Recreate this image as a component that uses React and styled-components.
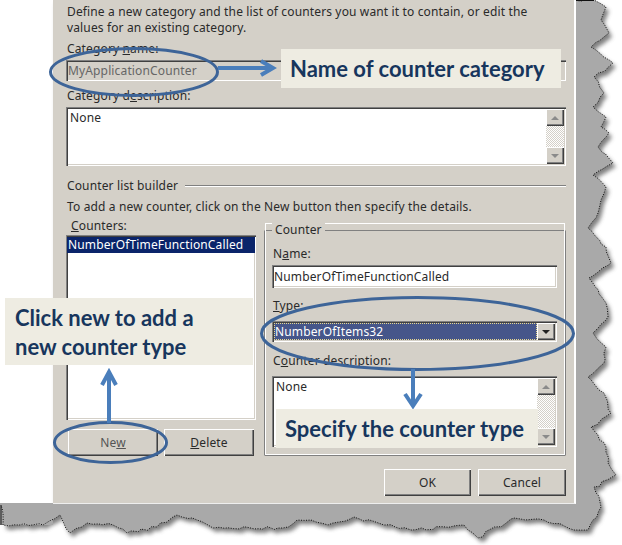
import React from "react";
import styled, { createGlobalStyle } from "styled-components";

const Global = createGlobalStyle`
  html, body { margin: 0; padding: 0; background: #fff; }
  body { font-family: "Noto Sans", "Open Sans", sans-serif; font-size: 12px; color: #2a2a2a; }
`;

const raised = `box-shadow: inset 1px 1px 0 #fff, inset -1px -1px 0 #404040, inset -2px -2px 0 #808080;`;
const sunken = `box-shadow: inset 1px 1px 0 #808080, inset 2px 2px 0 #404040, inset -1px -1px 0 #fff, inset -2px -2px 0 #d4d0c8;`;

const Page = styled.div`
  position: relative;
  width: 622px;
  height: 545px;
  overflow: hidden;
`;
const Backdrop = styled.svg`
  position: absolute;
  left: 0;
  top: 0;
`;
const Dialog = styled.div`
  position: relative;
  box-sizing: border-box;
  margin-left: 53px;
  width: 523px;
  height: 504px;
  padding: 4px 8px 0 13px;
  background: #d4d0c8;
  border-right: 2px solid #fff;
  border-bottom: 1px solid #eee;
  display: flex;
  flex-direction: column;
  letter-spacing: 0.14px;
`;
const Intro = styled.div`
  line-height: 16px;
  margin-left: 1px;
  white-space: nowrap;
`;
const Label = styled.div`
  height: 16px;
  line-height: 16px;
  margin: ${(p) => p.$top || 0}px 0 ${(p) => p.$bottom || 0}px ${(p) => p.$left || 1}px;
  white-space: nowrap;
`;
const Field = styled.div`
  box-sizing: border-box;
  height: ${(p) => p.$h}px;
  background: ${(p) => (p.$disabled ? "#d4d0c8" : "#fff")};
  color: ${(p) => (p.$disabled ? "#666" : "#2a2a2a")};
  ${sunken}
  padding: 0 2px;
  display: flex;
  align-items: center;
  white-space: nowrap;
`;
const TextBox = styled.div`
  box-sizing: border-box;
  height: ${(p) => p.$h}px;
  margin-top: ${(p) => p.$top || 0}px;
  background: #fff;
  ${sunken}
  padding: 2px;
  display: flex;
  justify-content: space-between;
`;
const BoxText = styled.div`
  padding: 1px 0 0 2px;
  line-height: 16px;
`;
const Scrollbar = styled.div`
  width: 18px;
  display: flex;
  flex-direction: column;
  justify-content: space-between;
  background: repeating-conic-gradient(#d4d0c8 0 25%, #fff 0 50%) 0 0 / 2px 2px;
`;
const ArrowButton = styled.div`
  width: 18px;
  height: ${(p) => p.$h || 17}px;
  background: #d4d0c8;
  ${raised}
  display: flex;
  align-items: center;
  justify-content: center;
  flex: none;
`;
const Arrow = styled.i`
  width: 0;
  height: 0;
  border-left: 4px solid transparent;
  border-right: 4px solid transparent;
  ${(p) => (p.$up ? "border-bottom" : "border-top")}: 4px solid ${(p) => p.$color || "#8a8a8a"};
`;
const SectionHead = styled.div`
  display: flex;
  align-items: center;
  gap: 7px;
  height: 16px;
  margin: 11px 0 0 1px;
  white-space: nowrap;
`;
const Rule = styled.div`
  flex: 1;
  height: 2px;
  margin-top: 2px;
  background: linear-gradient(#808080 50%, #fff 50%);
`;
const Columns = styled.div`
  display: flex;
  gap: 8px;
`;
const LeftCol = styled.div`
  width: 190px;
  display: flex;
  flex-direction: column;
`;
const List = styled.div`
  box-sizing: border-box;
  height: 185px;
  margin-top: 1px;
  padding: 2px 1px;
  background: #fff;
  ${sunken}
`;
const ListRow = styled.div`
  height: 16px;
  line-height: 16px;
  padding-left: 1px;
  background: #0a246a;
  color: #fff;
  white-space: nowrap;
`;
const ButtonRow = styled.div`
  display: flex;
  gap: ${(p) => p.$gap}px;
  margin: ${(p) => p.$margin};
  justify-content: ${(p) => p.$justify || "flex-start"};
`;
const Button = styled.div`
  box-sizing: border-box;
  width: ${(p) => p.$w}px;
  height: 27px;
  background: #d4d0c8;
  ${raised}
  color: ${(p) => (p.$dim ? "#555" : "#2a2a2a")};
  display: flex;
  align-items: center;
  justify-content: center;
`;
const RightCol = styled.div`
  width: 302px;
  padding-top: 4px;
`;
const Group = styled.fieldset`
  box-sizing: border-box;
  margin: 0;
  height: 234px;
  padding: 0 8px 0 7px;
  border: 1px solid #808080;
  outline: 1px solid #fff;
  outline-offset: -2px;
  border-radius: 1px;
`;
const Legend = styled.legend`
  margin-left: 0;
  padding: 0 3px;
  line-height: 16px;
  height: 16px;
  position: relative;
  background: #d4d0c8;
`;
const Select = styled.div`
  box-sizing: border-box;
  height: 21px;
  margin-top: 7px;
  ${sunken}
  background: #fff;
  padding: 2px;
  display: flex;
`;
const SelectValue = styled.div`
  flex: 1;
  background: #46568a;
  color: #fff;
  line-height: 17px;
  padding-left: 1px;
  outline: 1px dotted #e8d890;
  outline-offset: -1px;
  white-space: nowrap;
`;
const Overlay = styled.svg`
  position: absolute;
  left: 0;
  top: 0;
  pointer-events: none;
`;
const Callout = styled.div`
  position: absolute;
  box-sizing: border-box;
  left: ${(p) => p.$x}px;
  top: ${(p) => p.$y}px;
  width: ${(p) => p.$w}px;
  height: ${(p) => p.$h}px;
  padding: ${(p) => p.$pad || "0 0 0 9px"};
  background: #eeece2;
  color: #17365d;
  font: 700 22px/29px Lato, "Open Sans", sans-serif;
  display: flex;
  align-items: center;
  white-space: nowrap;
`;

const anchors = [
  [576, 0], [594, 0], [606, 7], [601, 20], [609, 33], [591, 47], [613, 63], [594, 77], [604, 93], [593, 107],
  [606, 117], [601, 127], [609, 133], [598, 147], [613, 163], [593, 175], [606, 187], [601, 200], [598, 213],
  [588, 228], [606, 247], [611, 263], [589, 278], [606, 303], [608, 317], [593, 333], [606, 347], [604, 363],
  [588, 377], [604, 393], [611, 413], [591, 427], [606, 447], [608, 463], [616, 475], [594, 487], [601, 507],
  [588, 530], [574, 530], [544, 520], [514, 518], [478, 538], [464, 525], [411, 530], [384, 525], [354, 517],
  [328, 525], [311, 520], [297, 520], [283, 528], [213, 528], [197, 520], [177, 515], [157, 527], [127, 533],
  [113, 525], [87, 523], [70, 533], [60, 515], [43, 525], [3, 525], [1, 505],
];

function tornPath() {
  let seed = 7;
  const rnd = () => {
    seed = (seed * 16807) % 2147483647;
    return seed / 2147483647 - 0.5;
  };
  const pts = [];
  anchors.forEach((a, i) => {
    pts.push(a);
    const b = anchors[i + 1];
    if (!b) return;
    const steps = Math.floor(Math.hypot(b[0] - a[0], b[1] - a[1]) / 5);
    for (let s = 1; s < steps; s++) {
      const t = s / steps;
      pts.push([a[0] + (b[0] - a[0]) * t + rnd() * 3, a[1] + (b[1] - a[1]) * t + rnd() * 3]);
    }
  });
  return pts.map((p) => `${p[0].toFixed(1)},${p[1].toFixed(1)}`).join(" ");
}

const Torn = () => {
  const pts = tornPath();
  const closed = `${pts} 53,505 53,0`;
  return (
    <Backdrop width="622" height="545">
      <defs>
        <filter id="tornShadow" x="-10%" y="-10%" width="120%" height="120%">
          <feGaussianBlur stdDeviation="2" />
        </filter>
      </defs>
      <polygon points={closed} fill="#555" transform="translate(3 4)" filter="url(#tornShadow)" opacity="0.75" />
      <polygon points={closed} fill="#a9a9a9" />
      <polygon points="0,503 53,503 53,525 0,525" fill="#a9a9a9" />
      <polyline points={pts} fill="none" stroke="#111" strokeWidth="1" strokeDasharray="1 1.5" />
      <path d="M576 .5H594M1 505V525" stroke="#111" fill="none" />
    </Backdrop>
  );
};

const Annotations = () => (
  <Overlay width="622" height="545">
    <g fill="none" stroke="#3d6498" strokeWidth="3">
      <ellipse cx="134" cy="72" rx="83.5" ry="23.5" />
      <ellipse cx="417.5" cy="333.5" rx="156" ry="36" />
      <ellipse cx="110.5" cy="442.5" rx="56" ry="20" />
    </g>
    <g fill="none" stroke="#4a7ebb" strokeWidth="4">
      <path d="M218 68H272M261 61L273 68L261 75" />
      <path d="M109 423V373M102 385L109 372L116 385" />
      <path d="M413 369V405M405 394L413 406L421 394" />
    </g>
  </Overlay>
);

const ScrollBar = () => (
  <Scrollbar>
    <ArrowButton><Arrow $up /></ArrowButton>
    <ArrowButton><Arrow /></ArrowButton>
  </Scrollbar>
);

export default function App() {
  return (
    <Page>
      <Global />
      <Torn />
      <Dialog>
        <Intro>
          Define a new category and the list of counters you want it to contain, or edit the<br />
          values for an existing category.
        </Intro>
        <Label $top={5} $bottom={3}>Category <u>n</u>ame:</Label>
        <Field $h={21} $disabled>MyApplicationCounter</Field>
        <Label $top={7} $bottom={3}>Category d<u>e</u>scription:</Label>
        <TextBox $h={59}>
          <BoxText>None</BoxText>
          <ScrollBar />
        </TextBox>
        <SectionHead>Counter list builder<Rule /></SectionHead>
        <Label $top={6} $bottom={3}>To add a new counter, click on the New button then specify the details.</Label>
        <Columns>
          <LeftCol>
            <Label $left={5}><u>C</u>ounters:</Label>
            <List><ListRow>NumberOfTimeFunctionCalled</ListRow></List>
            <ButtonRow $gap={6} $margin="9px 0 0 2px">
              <Button $w={90} $dim>Ne<u>w</u></Button>
              <Button $w={90}><u>D</u>elete</Button>
            </ButtonRow>
          </LeftCol>
          <RightCol>
            <Group>
              <Legend>Counter</Legend>
              <Label $top={8} $bottom={3}>N<u>a</u>me:</Label>
              <Field $h={23}>NumberOfTimeFunctionCalled</Field>
              <Label $top={10}><u>T</u>ype:</Label>
              <Select>
                <SelectValue>NumberOfItems32</SelectValue>
                <ArrowButton $h={17}><Arrow $color="#222" /></ArrowButton>
              </Select>
              <Label $top={11}>C<u>o</u>unter description:</Label>
              <TextBox $h={71} $top={7}>
                <BoxText>None</BoxText>
                <ScrollBar />
              </TextBox>
            </Group>
          </RightCol>
        </Columns>
        <ButtonRow $gap={7} $margin="13px 0 0 0" $justify="flex-end">
          <Button $w={87}>OK</Button>
          <Button $w={88}>Cancel</Button>
        </ButtonRow>
      </Dialog>
      <Annotations />
      <Callout $x={281} $y={49} $w={280} $h={39}>Name of counter category</Callout>
      <Callout $x={5} $y={298} $w={248} $h={67} $pad="0 0 0 10px">Click new to add a<br />new counter type</Callout>
      <Callout $x={276} $y={409} $w={262} $h={39}>Specify the counter type</Callout>
    </Page>
  );
}
